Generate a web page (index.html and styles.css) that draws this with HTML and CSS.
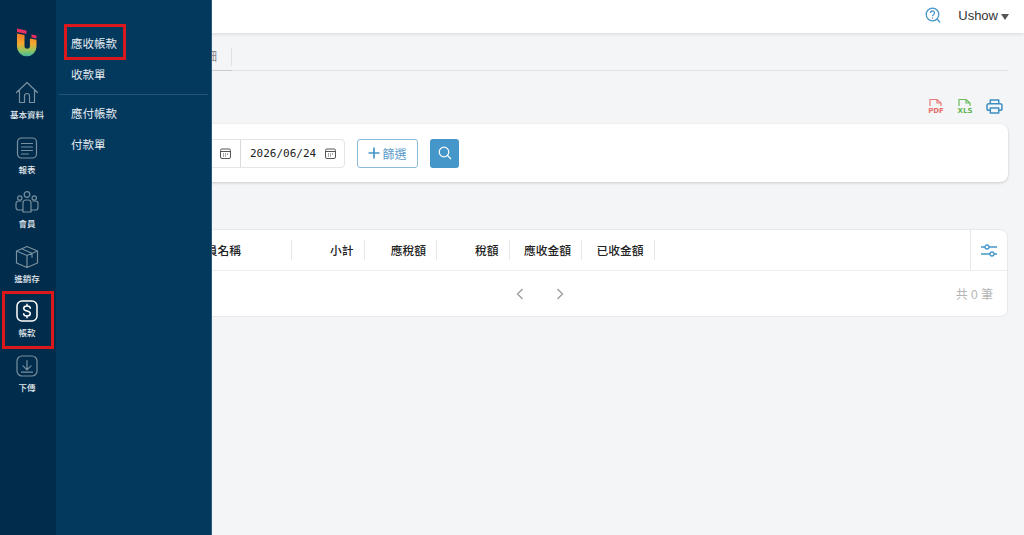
FILE: index.html
```html
<!DOCTYPE html>
<html lang="zh-Hant">
<head>
  <meta charset="UTF-8">
  <meta name="viewport" content="width=device-width, initial-scale=1.0">
  <title>應收帳款</title>
  <link rel="stylesheet" href="styles.css">
</head>
<body>

<nav class="sidebar">
  <div class="rail">
    <div class="logo">
      <svg width="22" height="29" viewBox="0 0 22 29">
        <defs>
          <linearGradient id="logoGrad" x1="0" y1="0" x2="0" y2="1">
            <stop offset="0" stop-color="#f47a26"/>
            <stop offset=".45" stop-color="#f3a92f"/>
            <stop offset=".75" stop-color="#93c760"/>
            <stop offset="1" stop-color="#41b79c"/>
          </linearGradient>
        </defs>
        <path d="M1 0.500 L10.500 2.500 V6 L1 4 Z" fill="#ea2f62"/>
        <path d="M15.500 6.500 L20.500 7.500 V10.500 L15.500 9.500 Z" fill="#ea2f62"/>
        <path d="M1 5.500 L8.500 7 V18 a2.700 2.700 0 0 0 5.400 0 V10.500 L20.500 11.800 V18.500 a9.750 9.750 0 0 1 -19.500 0 Z" fill="url(#logoGrad)"/>
      </svg>
    </div>
    <a class="rail-item">
      <svg width="24" height="24" viewBox="0 0 24 24"><path d="M1.500 11.500 12 1.500l10.500 10M4.500 9v12.500h5V15a2.500 2.500 0 0 1 5 0v6.500h5V9"/></svg>
      <span>基本資料</span>
    </a>
    <a class="rail-item">
      <svg width="24" height="24" viewBox="0 0 24 24"><rect x="2.500" y="2" width="19" height="20" rx="4"/><path d="M6.500 7.500h11M6.500 11h11M6.500 14.500h11M6.500 18h7"/></svg>
      <span>報表</span>
    </a>
    <a class="rail-item">
      <svg width="24" height="24" viewBox="0 0 24 24"><circle cx="12" cy="4.500" r="2.800"/><circle cx="4.800" cy="8" r="2.200"/><circle cx="19.200" cy="8" r="2.200"/><path d="M8 22v-9a3 3 0 0 1 3-3h2a3 3 0 0 1 3 3v9ZM8 20H3.500A2.500 2.500 0 0 1 1 17.500V13.500a2.500 2.500 0 0 1 2.500-2.500H6M16 20h4.500a2.500 2.500 0 0 0 2.500-2.500V13.500a2.500 2.500 0 0 0-2.500-2.500H18"/></svg>
      <span>會員</span>
    </a>
    <a class="rail-item">
      <svg width="24" height="24" viewBox="0 0 24 24"><path d="M12 1.500 22.500 6v12L12 22.500 1.500 18V6ZM1.500 6 12 10.500 22.500 6M12 10.500v12M6.500 3.800 17 8.300v4"/></svg>
      <span>進銷存</span>
    </a>
    <a class="rail-item active marked">
      <svg width="24" height="24" viewBox="0 0 24 24"><rect x="2" y="2" width="20" height="20" rx="5"/><path d="M15.300 9.300C15.300 7.800 13.900 7 12 7S8.700 8 8.700 9.500c0 3.500 6.600 1.600 6.600 5 0 1.500-1.400 2.500-3.300 2.500s-3.300-.8-3.300-2.300M12 5.200V7M12 17v1.800"/></svg>
      <span>帳款</span>
    </a>
    <a class="rail-item">
      <svg width="24" height="24" viewBox="0 0 24 24"><rect x="2" y="2" width="20" height="20" rx="5"/><path d="M12 6.500v9M8 11.800l4 4 4-4M6.500 18.200h11"/></svg>
      <span>下傳</span>
    </a>
  </div>
  <div class="panel">
    <a class="panel-item marked">應收帳款</a>
    <a class="panel-item">收款單</a>
    <div class="panel-line"></div>
    <a class="panel-item">應付帳款</a>
    <a class="panel-item">付款單</a>
  </div>
</nav>

<div class="page">
  <header class="topbar">
    <svg class="help" width="16" height="17" viewBox="0 0 16 17"><circle cx="7.500" cy="7.500" r="6.300"/><path d="M12 12l3 3.500M5.500 6a2 2 0 1 1 3 1.700c-.7.400-1 .8-1 1.600"/><circle class="dot" cx="7.500" cy="11" r=".7"/></svg>
    <span class="user">Ushow</span>
    <i class="caret"></i>
  </header>

  <main class="content">
    <div class="tabs">
      <a class="tab"><span>帳款明細</span></a>
    </div>

    <div class="tools">
      <svg class="doc pdf" width="16" height="16" viewBox="0 0 16 16"><path d="M2 8V1.500h7l4 3.500v3M9 1.500V5h4"/><text x="8" y="15">PDF</text></svg>
      <svg class="doc xls" width="16" height="16" viewBox="0 0 16 16"><path d="M2 8V1.500h7l4 3.500v3M9 1.500V5h4"/><text x="8" y="15">XLS</text></svg>
      <svg class="printer" width="17" height="15" viewBox="0 0 18 16"><path d="M4.500 5V1h9v4M4.500 12H3a2 2 0 0 1-2-2V7a2 2 0 0 1 2-2h12a2 2 0 0 1 2 2v3a2 2 0 0 1-2 2h-1.500M4.500 9.500h9V15h-9Z"/></svg>
    </div>

    <section class="card filter">
      <div class="range">
        <div class="date">
          <span>2026/06/24</span>
          <svg width="11" height="11" viewBox="0 0 11 11"><rect x=".5" y="1" width="10" height="9.500" rx="1.500"/><path d="M.5 3.500h10M3 6h1M5 6h1M7 6h1M3 8h1M5 8h1"/></svg>
        </div>
        <div class="date">
          <span>2026/06/24</span>
          <svg width="11" height="11" viewBox="0 0 11 11"><rect x=".5" y="1" width="10" height="9.500" rx="1.500"/><path d="M.5 3.500h10M3 6h1M5 6h1M7 6h1M3 8h1M5 8h1"/></svg>
        </div>
      </div>
      <button class="btn-filter">
        <svg width="12" height="12" viewBox="0 0 12 12"><path d="M6 .5v11M.5 6h11"/></svg>
        篩選
      </button>
      <button class="btn-search">
        <svg width="14" height="14" viewBox="0 0 14 14"><circle cx="6" cy="6" r="4.800"/><path d="M9.500 9.500l3.500 3.500"/></svg>
      </button>
    </section>

    <section class="card grid">
      <div class="grid-head">
        <div class="col col-name">會員名稱</div>
        <div class="col num">小計</div>
        <div class="col num">應稅額</div>
        <div class="col num">稅額</div>
        <div class="col num">應收金額</div>
        <div class="col num">已收金額</div>
        <div class="col-fill"></div>
        <div class="col-set">
          <svg width="16" height="13" viewBox="0 0 16 13"><path d="M0 3h4M8 3h8M0 10h9M13 10h3"/><circle cx="6" cy="3" r="2"/><circle cx="11" cy="10" r="2"/></svg>
        </div>
      </div>
      <div class="grid-foot">
        <div class="pager">
          <svg width="10" height="12" viewBox="0 0 10 12"><path d="M7.500 1 2.500 6l5 5"/></svg>
          <svg width="10" height="12" viewBox="0 0 10 12"><path d="M2.500 1l5 5-5 5"/></svg>
        </div>
        <span class="total">共 0 筆</span>
      </div>
    </section>
  </main>
</div>

</body>
</html>
```

FILE: styles.css
```css
* {
  margin: 0;
  padding: 0;
  box-sizing: border-box;
}
*::after {
  box-sizing: border-box;
}
body {
  height: 100vh;
  overflow: hidden;
  background: #f4f5f7;
  font-family: "Liberation Sans", "Noto Sans CJK TC", sans-serif;
  color: #222;
}

/* sidebar sits over the page */
.sidebar {
  position: fixed;
  top: 0;
  left: 0;
  bottom: 0;
  z-index: 5;
  display: flex;
}
.rail {
  width: 56px;
  background: #022c4b;
  display: flex;
  flex-direction: column;
  align-items: center;
}
.logo {
  height: 79px;
  padding: 28px 2px 0 0;
  display: flex;
  justify-content: center;
}
.rail-item {
  position: relative;
  width: 56px;
  height: 54.5px;
  padding: 2px 2px 0 0;
  display: flex;
  flex-direction: column;
  align-items: center;
  gap: 4px;
  color: #e3e9ee;
  font-size: 8.500px;
  line-height: 12px;
  font-weight: 500;
}
.rail-item svg {
  fill: none;
  stroke: #78909f;
  stroke-width: 1.2;
  stroke-linejoin: round;
  stroke-linecap: round;
}
.rail-item.active svg {
  stroke: #fff;
  stroke-width: 1.5;
}
.marked::after {
  content: "";
  position: absolute;
  border: 3px solid #d9191c;
}
.rail-item.marked::after {
  left: 2px;
  width: 52px;
  top: -6px;
  height: 58px;
}
.panel {
  width: 156px;
  padding-top: 29px;
  background: #04395e;
  border-right: 1px solid #2c5a7c;
  display: flex;
  flex-direction: column;
}
.panel-item {
  position: relative;
  height: 31px;
  padding-left: 15px;
  color: #e4ebf0;
  font-size: 11.5px;
  line-height: 30px;
}
.panel-item.marked::after {
  left: 8px;
  top: -5px;
  width: 62px;
  height: 36px;
}
.panel-line {
  height: 1px;
  margin: 3px 3px 4px;
  background: #23547a;
}

/* page */
.page {
  margin-left: 56px;
}
.topbar {
  height: 33px;
  padding: 0 15px 2px 0;
  background: #fff;
  box-shadow: 0 1px 4px rgba(0, 0, 0, .12);
  display: flex;
  justify-content: flex-end;
  align-items: center;
}
.help {
  margin-right: 17px;
  fill: none;
  stroke: #4596c9;
  stroke-width: 1.3;
}
.help .dot {
  fill: #4596c9;
  stroke: none;
}
.user {
  font-size: 13px;
  color: #333;
}
.caret {
  margin: 2px 0 0 3px;
  border-left: 4px solid transparent;
  border-right: 4px solid transparent;
  border-top: 6px solid #555;
}
.content {
  padding: 0 16px;
}
.tabs {
  height: 38px;
  padding-top: 15px;
  border-bottom: 1px solid #dfe1e5;
  display: flex;
}
.tab {
  width: 160px;
  height: 23px;
  border-bottom: 1px solid #c8cbd0;
  color: #888;
  font-size: 12px;
  line-height: 18px;
}
.tab span {
  display: block;
  height: 18px;
  padding-right: 14px;
  text-align: right;
  border-right: 1px solid #dfe1e5;
}
.tools {
  height: 53px;
  padding: 27px 5px 0 0;
  display: flex;
  justify-content: flex-end;
  align-items: flex-start;
  gap: 13px;
}
.doc path {
  fill: none;
  stroke-width: 1.2;
}
.doc text {
  font-family: "DejaVu Sans", sans-serif;
  font-size: 7px;
  font-weight: 700;
  text-anchor: middle;
}
.pdf path { stroke: #ea7a78; }
.pdf text { fill: #ea6f6d; }
.xls path { stroke: #6dbb5e; }
.xls text { fill: #5fb650; }
.printer {
  margin-top: 1px;
  fill: none;
  stroke: #3d8fc4;
  stroke-width: 1.6;
  stroke-linejoin: round;
}
.card {
  background: #fff;
  border-radius: 8px;
}
.filter {
  height: 58px;
  padding-left: 63px;
  box-shadow: 0 1px 3px rgba(0, 0, 0, .18);
  display: flex;
  align-items: center;
}
.range {
  height: 29px;
  border: 1px solid #e3e5e8;
  border-radius: 4px;
  display: flex;
}
.date {
  width: 105px;
  padding: 0 9px;
  border-right: 1px solid #d8dade;
  display: flex;
  justify-content: space-between;
  align-items: center;
  font-family: "DejaVu Sans Mono", monospace;
  font-size: 11px;
  color: #222;
}
.date:last-child {
  width: 103px;
  padding-right: 8px;
  border-right: none;
}
.date svg {
  fill: none;
  stroke: #555;
  stroke-width: 1;
}
.btn-filter {
  width: 61px;
  height: 29px;
  margin-left: 12px;
  background: #fff;
  border: 1px solid #8cbbda;
  border-radius: 3px;
  color: #5b9cc9;
  font-family: inherit;
  font-size: 12px;
  display: flex;
  justify-content: center;
  align-items: center;
  gap: 2px;
}
.btn-filter svg {
  fill: none;
  stroke: #4596c9;
  stroke-width: 1.7;
}
.btn-search {
  width: 29px;
  height: 29px;
  margin-left: 12px;
  background: #4596c9;
  border: none;
  border-radius: 3px;
  display: flex;
  justify-content: center;
  align-items: center;
}
.btn-search svg {
  fill: none;
  stroke: #fff;
  stroke-width: 1.2;
}
.grid {
  height: 88px;
  margin-top: 47px;
  border: 1px solid #e8e9ec;
}
.grid-head {
  height: 41px;
  border-bottom: 1px solid #eceef0;
  display: flex;
  align-items: center;
}
.col {
  height: 20px;
  width: 72.500px;
  padding: 1px 10px 0 0;
  border-right: 1px solid #e6e7ea;
  font-size: 11.750px;
  font-weight: 500;
  line-height: 20px;
  color: #222;
  white-space: nowrap;
}
.col.num {
  text-align: right;
}
.col-name {
  width: 219px;
  padding-left: 121px;
}
.col-fill {
  flex: 1;
}
.col-set {
  width: 37px;
  height: 40px;
  border-left: 1px solid #e6e7ea;
  display: flex;
  justify-content: center;
  align-items: center;
}
.col-set svg {
  fill: #fff;
  stroke: #4596c9;
  stroke-width: 1.3;
}
.grid-foot {
  position: relative;
  height: 45px;
  padding-right: 14px;
  display: flex;
  justify-content: flex-end;
  align-items: center;
}
.pager {
  position: absolute;
  left: 442px;
  top: 17px;
  display: flex;
  gap: 30px;
}
.pager svg {
  fill: none;
  stroke: #9a9a9a;
  stroke-width: 1.300;
}
.total {
  font-size: 12px;
  color: #b5b5b5;
}
```
